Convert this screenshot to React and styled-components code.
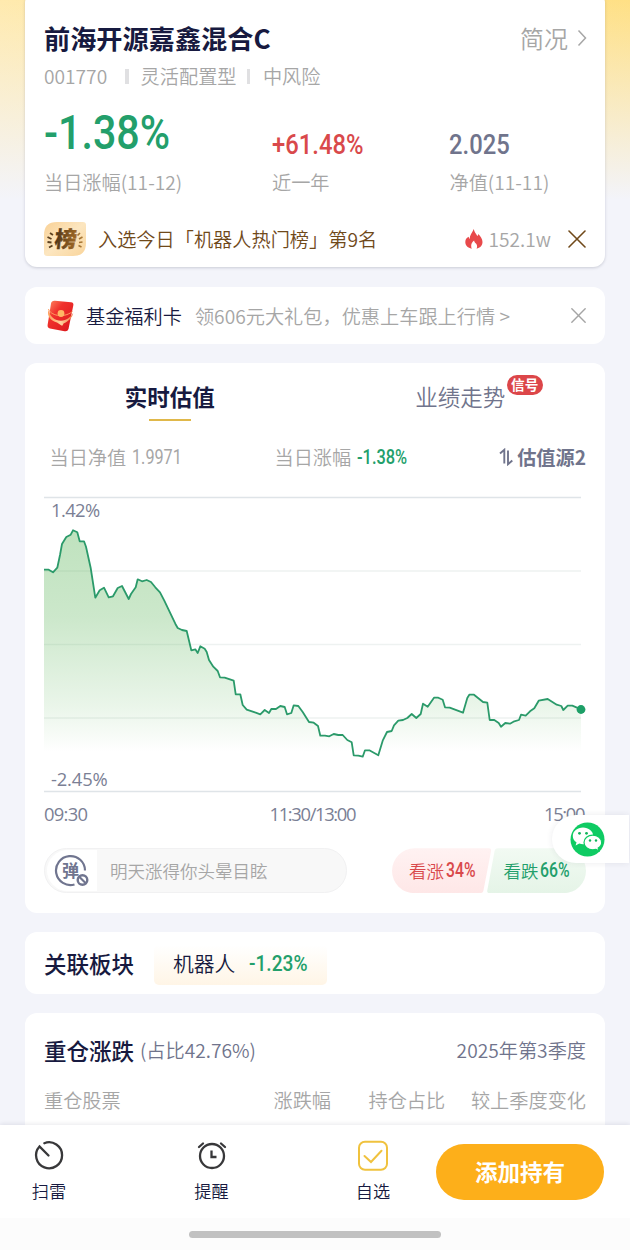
import React from 'react';
import styled, { createGlobalStyle, css } from 'styled-components';

const C = {
  page: '#f3f4fa',
  ink: '#171a40',
  slate: '#70748c',
  grey: '#a6a6a6',
  green: '#239f6b',
  red: '#d9494b',
  brown: '#70491a',
  amber: '#fdaf1a',
};

const GlobalStyle = createGlobalStyle`
  * { box-sizing: border-box; }
  body {
    margin: 0;
    font-family: 'Noto Sans CJK SC', sans-serif;
    font-weight: 350;
    color: ${C.ink};
    background: ${C.page};
  }
`;

const Screen = styled.div`
  width: 630px;
  height: 1250px;
  display: flex;
  flex-direction: column;
  overflow: hidden;
  background:
    linear-gradient(to bottom, rgba(243, 244, 250, 0), ${C.page}) 0 0 / 100% 200px no-repeat,
    linear-gradient(to right, #ffeaae, #ffe085) 0 0 / 100% 200px no-repeat,
    ${C.page};
`;

const Feed = styled.main`
  flex: 1;
  min-height: 0;
  overflow: hidden;
  display: flex;
  flex-direction: column;
  gap: 19.5px;
  padding: 0 24.6px;
`;

const Card = styled.section`
  flex: none;
  height: ${(p) => p.$h}px;
  padding: 0 19.4px;
  border-radius: 12px;
  background: #fff;
`;

const FundCard = styled(Card)`
  margin-top: -9px;
  padding-top: 27px;
  box-shadow: 0 1px 3px rgba(60, 64, 90, 0.22);
`;

const Row = styled.div`
  display: flex;
  align-items: center;
  justify-content: ${(p) => (p.$between ? 'space-between' : 'flex-start')};
  height: ${(p) => p.$h}px;
  white-space: nowrap;
`;

const Txt = styled.span`
  font-size: ${(p) => p.$size || 19.2}px;
  font-weight: ${(p) => p.$weight || 350};
  color: ${(p) => p.$color || C.grey};
  margin-left: ${(p) => p.$ml || 0}px;
  margin-right: ${(p) => p.$mr || 0}px;
  white-space: nowrap;
`;

const Num = styled.span`
  display: inline-block;
  font-family: Roboto, sans-serif;
  font-weight: ${(p) => p.$weight || 500};
  font-size: ${(p) => p.$size}px;
  line-height: ${(p) => p.$line || p.$size * 1.2}px;
  color: ${(p) => p.$color};
  transform: scaleX(${(p) => p.$sx || 0.85});
  transform-origin: left center;
  white-space: nowrap;
`;

const FundName = styled.h1`
  margin: 0;
  font-size: 26.2px;
  font-weight: 700;
`;

const Profile = styled.div`
  display: flex;
  align-items: center;
  gap: 9px;
  font-size: 24px;
  color: ${C.grey};
  margin-right: -1px;
`;

const Divider = styled.i`
  width: 3.4px;
  height: 15px;
  margin: 0 ${(p) => p.$after}px 0 ${(p) => p.$before}px;
  background: #e0e0e2;
`;

const Stats = styled.div`
  display: grid;
  grid-template-columns: 228px 177.5px 1fr;
  align-items: end;
  height: 105px;
`;

const Stat = styled.div`
  display: flex;
  flex-direction: column;
`;

const StatLabel = styled.span`
  height: 37px;
  line-height: 38px;
  font-size: 19.2px;
  color: ${C.grey};
`;

const Push = styled.div`
  margin-left: auto;
  display: flex;
  align-items: center;
`;

const Tabs = styled.div`
  display: flex;
  height: 58px;
  margin: 0 -19.4px;
`;

const Tab = styled.div`
  flex: 1;
  display: flex;
  justify-content: center;
  padding-top: 16px;
  font-size: 22.5px;
  line-height: 34px;
  font-weight: ${(p) => (p.$active ? 700 : 350)};
  color: ${(p) => (p.$active ? C.ink : C.slate)};
`;

const TabLabel = styled.span`
  position: relative;
  ${(p) =>
    p.$active &&
    css`
      &::after {
        content: '';
        position: absolute;
        left: 24px;
        bottom: 0;
        width: 42px;
        height: 2px;
        background: #e0b84a;
      }
    `}
`;

const SignalBadge = styled.span`
  position: absolute;
  left: 91.5px;
  top: -4px;
  width: 36px;
  height: 20px;
  border-radius: 10px;
  background: #dc4649;
  color: #fff;
  font-size: 13.6px;
  font-weight: 700;
  line-height: 19px;
  text-align: center;
`;

const Quote = styled.div`
  display: grid;
  grid-template-columns: 225px 1fr auto;
  align-items: center;
  height: 71.5px;
  padding-left: 5.5px;
`;

const QuoteItem = styled.div`
  display: flex;
  align-items: center;
  gap: ${(p) => p.$gap || 5.5}px;
`;

const ChartBox = styled.div`
  position: relative;
  height: 300px;
  svg { display: block; }
`;

const axisText = css`
  font-family: 'Open Sans', 'Noto Sans', sans-serif;
  font-weight: 400;
  font-size: 18.4px;
  line-height: 24px;
  color: #7b7f95;
`;

const Limit = styled.span`
  ${axisText}
  letter-spacing: ${(p) => p.$track}px;
  position: absolute;
  left: 7px;
  top: ${(p) => p.$top}px;
`;

const TimeAxis = styled.div`
  ${axisText}
  display: grid;
  grid-template-columns: 225.5px 1fr auto;
  align-items: center;
  height: 43px;
  margin-right: 2px;
`;

const Time = styled.span`
  letter-spacing: ${(p) => p.$track}px;
`;

const Actions = styled.div`
  display: flex;
  align-items: center;
  justify-content: space-between;
  margin-top: 12.5px;
  height: 45px;
`;

const Comment = styled.div`
  display: flex;
  align-items: center;
  width: 303px;
  height: 45px;
  padding: 2px;
  border: 1px solid #f1f1f2;
  border-radius: 23px;
  background: #f8f8f8;
`;

const CommentIcon = styled.div`
  display: flex;
  align-items: center;
  justify-content: center;
  width: 50px;
  height: 41px;
  margin-right: 13px;
  border-radius: 21px 0 0 21px;
  background: #fff;
`;

const Votes = styled.div`
  display: flex;
`;

const Vote = styled.div`
  display: flex;
  align-items: center;
  gap: 1.5px;
  width: 99px;
  height: 45px;
  ${(p) =>
    p.$up
      ? css`
          padding-left: 17px;
          background: linear-gradient(#fff2f2, #fee7e7);
          clip-path: path('M22.5 0 H97 Q99.5 0 99 3 L91.5 42 Q91 45 88 45 H22.5 A22.5 22.5 0 0 1 22.5 0Z');
        `
      : css`
          margin-left: -4px;
          padding-left: 16.5px;
          background: linear-gradient(#f2faf3, #e5f4e7);
          clip-path: path('M11 0 H76.5 A22.5 22.5 0 0 1 76.5 45 H3 Q-0.5 45 0.3 42 L7.5 3 Q8 0 11 0Z');
        `}
`;

const SectorTag = styled.div`
  display: flex;
  align-items: center;
  gap: 13.5px;
  width: 173px;
  height: 40px;
  margin: 4px 0 0 20px;
  padding: 0 19px 4px;
  border-radius: 5px;
  background: linear-gradient(#ffffff, #fff5e6);
`;

const HoldingHead = styled.div`
  display: grid;
  grid-template-columns: 229.5px 95px 1fr auto;
  align-items: center;
  height: 28px;
  font-size: 19.2px;
  color: ${C.grey};
`;

const ShareFloat = styled.button`
  position: absolute;
  left: 552px;
  top: 815px;
  width: 77px;
  height: 48px;
  padding: 0 0 0 18px;
  border: 0;
  border-radius: 24px 0 0 24px;
  background: #fff;
  box-shadow: 0 0 6px rgba(40, 44, 70, 0.09);
  display: flex;
  align-items: center;
`;

const BottomBar = styled.nav`
  flex: none;
  display: flex;
  height: 92.5px;
  padding: 0 26px 0 0;
  background: #fff;
  box-shadow: 0 -1px 4px rgba(40, 44, 70, 0.1);
  position: relative;
`;

const NavItem = styled.div`
  display: flex;
  flex-direction: column;
  align-items: center;
  width: ${(p) => p.$w}px;
  padding-top: 14px;
  font-size: 17.2px;
  line-height: 26px;
  svg { display: block; margin-bottom: 5px; }
`;

const AddButton = styled.button`
  width: 168px;
  height: 56px;
  margin: 18.5px 0 0 auto;
  padding: 0 0 1px;
  border: 0;
  border-radius: 28px;
  background: ${C.amber};
  color: #fff;
  font: 700 22.5px 'Noto Sans CJK SC', sans-serif;
`;

const HomeArea = styled.div`
  flex: none;
  height: 32.5px;
  padding-top: 13px;
  background: #fcfcfc;
  position: relative;
`;

const HomeIndicator = styled.div`
  width: 252px;
  height: 7px;
  margin: 0 auto;
  border-radius: 4px;
  background: #c1c1c1;
`;

// Intraday estimate in thirds of a pixel, from the upper left of the plot.
const SERIES = [
  [0, 218], [14, 218], [27, 226], [40, 212], [48, 174], [54, 141], [67, 120], [80, 113], [87, 100], [100, 106],
  [107, 133], [120, 133], [126, 149], [140, 213], [154, 302], [167, 280], [180, 272], [194, 301], [207, 298],
  [221, 273], [234, 267], [254, 306], [261, 291], [275, 271], [281, 247], [294, 253], [308, 249], [321, 255],
  [334, 271], [348, 286], [361, 311], [394, 380], [401, 393], [414, 399], [428, 402], [442, 460], [454, 457],
  [461, 468], [469, 448], [482, 455], [488, 465], [495, 489], [508, 509], [521, 522], [528, 541], [542, 542],
  [569, 551], [575, 592], [589, 592], [596, 624], [608, 638], [635, 647], [649, 652], [662, 639], [675, 648],
  [682, 636], [696, 636], [709, 627], [722, 630], [729, 652], [742, 648], [749, 625], [763, 627], [776, 645],
  [795, 675], [809, 677], [822, 687], [829, 716], [843, 716], [856, 718], [869, 711], [883, 714], [896, 714],
  [910, 729], [923, 736], [929, 775], [943, 776], [956, 779], [963, 760], [976, 760], [1003, 775], [1016, 731],
  [1029, 705], [1043, 702], [1050, 685], [1063, 671], [1077, 669], [1090, 663], [1103, 651], [1117, 663],
  [1130, 651], [1137, 620], [1151, 629], [1170, 602], [1183, 602], [1196, 608], [1203, 631], [1217, 632],
  [1257, 647], [1270, 603], [1276, 593], [1290, 593], [1317, 615], [1330, 617], [1337, 669], [1351, 669],
  [1364, 678], [1371, 689], [1384, 678], [1398, 680], [1411, 673], [1425, 669], [1431, 653], [1445, 656],
  [1458, 643], [1471, 634], [1484, 611], [1511, 606], [1538, 623], [1552, 627], [1558, 639], [1571, 626],
  [1585, 626], [1611, 637],
];
const LINE = SERIES.map(([x, y]) => `${(x / 3).toFixed(1)},${(y / 3 + 4).toFixed(1)}`).join(' L');

function Chart() {
  return (
    <ChartBox>
      <svg width="542" height="300" viewBox="0 0 542 300">
        <defs>
          <linearGradient id="fall" x1="0" y1="34" x2="0" y2="259" gradientUnits="userSpaceOnUse">
            <stop offset="0" stopColor="#5fb65c" stopOpacity="0.4" />
            <stop offset="0.4" stopColor="#5fb65c" stopOpacity="0.32" />
            <stop offset="0.8" stopColor="#5fb65c" stopOpacity="0.13" />
            <stop offset="1" stopColor="#5fb65c" stopOpacity="0" />
          </linearGradient>
        </defs>
        {[4.5, 78, 151.5, 225, 298.5].map((y, i) => (
          <line key={y} x1="0" x2="537" y1={y} y2={y} stroke={i % 4 ? '#eef2f1' : '#dfe4e8'} strokeWidth="1.6" />
        ))}
        <path d={`M${LINE} L537,259 L0,259 Z`} fill="url(#fall)" />
        <path d={`M${LINE}`} fill="none" stroke="#2b9a6a" strokeWidth="1.8" strokeLinejoin="round" />
        <circle cx="537" cy="216.5" r="4.4" fill="#1d9f67" />
      </svg>
      <Limit $top={5} $track={-0.6}>1.42%</Limit>
      <Limit $top={274.5} $track={-0.15}>-2.45%</Limit>
    </ChartBox>
  );
}

const Cross = ({ size, color, width }) => (
  <svg width={size} height={size} viewBox="0 0 18 18" fill="none" stroke={color} strokeWidth={width} strokeLinecap="round">
    <path d="M1 1 17 17M17 1 1 17" />
  </svg>
);

const RankBadge = () => (
  <svg width="42" height="34" viewBox="0 0 42 34">
    <defs>
      <linearGradient id="gold" x1="0" y1="0" x2="1" y2="1">
        <stop offset="0" stopColor="#f9d196" />
        <stop offset="0.5" stopColor="#fce6c0" />
        <stop offset="1" stopColor="#f9d49a" />
      </linearGradient>
      <linearGradient id="bronze" x1="0" y1="0" x2="1" y2="0">
        <stop offset="0" stopColor="#4d3418" />
        <stop offset="1" stopColor="#a36a24" />
      </linearGradient>
    </defs>
    <path d="M13 0H39Q42 0 42 3V21Q42 34 29 34H3Q0 34 0 31V13Q0 0 13 0Z" fill="url(#gold)" />
    <path d="M6 11 9 13M3.5 15 7.5 17M3.5 20 7.5 20.5M5 25.5 8.5 23.5" stroke="#5c4020" strokeWidth="1.8" />
    <path d="M36 11 33.5 13.5M38.5 15 35 17M38.5 20 35 20.5M37.5 25 34.5 23.5" stroke="#a67635" strokeWidth="1.6" />
    <text
      transform="translate(21 25) skewX(-6)"
      fontSize="22" fontWeight="900" textAnchor="middle" fill="url(#bronze)" stroke="url(#bronze)" strokeWidth="0.3"
    >
      榜
    </text>
  </svg>
);

const RedPacket = () => (
  <svg width="30" height="34" viewBox="0 0 30 34">
    <defs>
      <linearGradient id="packet" x1="0" y1="0" x2="1" y2="1">
        <stop offset="0" stopColor="#ff8a62" />
        <stop offset="0.35" stopColor="#f0322d" />
        <stop offset="1" stopColor="#d9151b" />
      </linearGradient>
      <linearGradient id="ribbon" x1="0" y1="0" x2="1" y2="0">
        <stop offset="0" stopColor="#ff9a54" />
        <stop offset="0.5" stopColor="#ffd3a0" />
        <stop offset="1" stopColor="#f0743e" />
      </linearGradient>
    </defs>
    <path d="M11 1.8 27 3.2Q30 3.6 29.3 6.5L24.5 30Q23.5 33 20.500 32.2L6 29.5Q3.2 28.8 3.6 26L7 4.5Q7.6 1.5 11 1.8Z" fill="url(#packet)" />
    <path d="M4.5 10C6 16 19 20 28.5 12.5" fill="none" stroke="#ff9d62" strokeWidth="1" />
    <path d="M4.5 11C2.5 17 7 22 13 23.5L17.5 26.5C18.5 27 19 26 19.5 24.5C24 22.5 28.5 19 29.3 13.5C27 18 22.5 21.5 17 21.8C11 21.8 6 18 4.5 11Z" fill="url(#ribbon)" />
    <circle cx="17" cy="14.5" r="3.4" fill="#ffb765" />
  </svg>
);

const Flame = () => (
  <svg width="18" height="20" viewBox="0 0 18 20">
    <path
      fill="#e8494b"
      d="M8.800 0C9.200 3 11 4.500 12.300 7C12.900 6.500 13.200 5.900 13.300 5C15.500 7 17.500 10 17.500 13C17.500 16.500 15 19 11.600 19.700C12.400 18 12.300 16.200 11 14.600C10 13.600 9.300 12.800 9.100 11.400C7.400 12.600 6.300 14.300 6.200 16.200C6.100 17.600 6.300 18.800 6.800 19.700C3 19 0.300 16.500 0.300 13C0.300 10 2 8.500 3.800 7.700C3.700 8.700 4 9.400 4.600 10C4.800 6 7 4 8.800 0Z"
    />
  </svg>
);

const SwapIcon = () => (
  <svg width="15" height="18" viewBox="0 0 15 18" fill="none" stroke={C.slate} strokeWidth="1.9">
    <path d="M1 5.500 5.300 1.800V15.500M9 2.500V16.200L13.300 12.500" />
  </svg>
);

const DanmuIcon = () => (
  <svg width="36" height="34" viewBox="0 0 36 34" fill="none" stroke="#70758f">
    <path d="M20.500 30.500A14.500 14.500 0 1 1 31 16.500" strokeWidth="2.2" />
    <text x="16.5" y="22.5" fontSize="17" fontWeight="700" textAnchor="middle" fill="#70758f" stroke="none">弹</text>
    <circle cx="28.5" cy="26" r="4.8" strokeWidth="2.4" fill="#fff" />
    <path d="M25.200 22.800 31.800 29.200" strokeWidth="2.2" />
  </svg>
);

const WechatIcon = () => (
  <svg width="35" height="35" viewBox="0 0 35 35">
    <circle cx="17.5" cy="17.5" r="17" fill="#0fcb63" />
    <path d="M13 5.500C7.300 5.500 2.800 9.200 2.800 13.900C2.800 16.600 4.300 18.800 6.500 20.300L5.600 23.400L9.300 21.600C10.500 22 11.700 22.200 13 22.200C18.500 22.200 23.200 18.500 23.200 13.900C23.200 9.200 18.500 5.500 13 5.500Z" fill="#fff" />
    <circle cx="9.5" cy="11.3" r="1.4" fill="#0fb45a" />
    <circle cx="16.5" cy="11.3" r="1.4" fill="#0fb45a" />
    <path
      d="M22.800 13.200C17.900 13.200 14 16.400 14 20.500C14 24.600 17.900 27.800 22.800 27.800C23.900 27.800 24.900 27.600 25.900 27.300L29 28.900L28.200 26.100C30.400 24.800 31.700 22.800 31.700 20.500C31.700 16.400 27.700 13.200 22.800 13.200Z"
      fill="#fff" stroke="#0fcb63" strokeWidth="1.2"
    />
    <circle cx="20" cy="18.5" r="1.2" fill="#0fb45a" />
    <circle cx="26" cy="18.5" r="1.2" fill="#0fb45a" />
  </svg>
);

const ScanIcon = () => (
  <svg width="32" height="34" viewBox="0.5 0.5 32 34" fill="none" stroke="#38383a" strokeWidth="2.3" strokeLinecap="round">
    <path d="M11.800 4.700A13 13 0 1 1 7 8L16 17" />
  </svg>
);

const AlarmIcon = () => (
  <svg width="32" height="34" viewBox="0 0.5 32 34" fill="none" stroke="#38383a" strokeWidth="2.3">
    <circle cx="16" cy="17.5" r="12" />
    <path d="M15.500 12V18.500H20.500" />
    <path d="M3 8.500 7 5M29 8.500 25 5" strokeLinecap="round" />
  </svg>
);

const CheckIcon = () => (
  <svg width="32" height="34" viewBox="0 0 32 34" fill="none" stroke="#f0c23e" strokeWidth="2">
    <rect x="2" y="2.8" width="28" height="28" rx="6" />
    <path d="M7.500 17 14 23 24.500 11.800" strokeLinecap="round" />
  </svg>
);

export default function App() {
  return (
    <>
      <GlobalStyle />
      <Screen>
        <Feed>
          <FundCard $h={276}>
            <Row $h={39} $between>
              <FundName>前海开源嘉鑫混合C</FundName>
              <Profile>
                简况
                <svg width="10" height="18" viewBox="0 0 10 18" fill="none" stroke={C.grey} strokeWidth="1.5">
                  <path d="M1.500 1.500 8.500 9 1.500 16.500" />
                </svg>
              </Profile>
            </Row>
            <Row $h={38}>
              <Txt>001770</Txt>
              <Divider $before={18} $after={12} />
              <Txt>灵活配置型</Txt>
              <Divider $before={10} $after={13} />
              <Txt>中风险</Txt>
            </Row>
            <Stats>
              <Stat>
                <Num $size={48.5} $line={60} $color={C.green}>-1.38%</Num>
                <StatLabel>当日涨幅(11-12)</StatLabel>
              </Stat>
              <Stat>
                <Num $size={28} $line={36} $color={C.red}>+61.48%</Num>
                <StatLabel>近一年</StatLabel>
              </Stat>
              <Stat>
                <Num $size={28} $line={36} $color={C.slate}>2.025</Num>
                <StatLabel>净值(11-11)</StatLabel>
              </Stat>
            </Stats>
            <Row $h={77}>
              <RankBadge />
              <Txt $color={C.brown} $ml={12}>入选今日「机器人热门榜」第9名</Txt>
              <Push>
                <Flame />
                <Txt $ml={6} $mr={17}>152.1w</Txt>
                <Cross size={18} color={C.brown} width={1.6} />
              </Push>
            </Row>
          </FundCard>

          <Card $h={57.3}>
            <Row $h={58.5}>
              <RedPacket />
              <Txt $color={C.ink} $ml={12} $mr={13}>基金福利卡</Txt>
              <Txt>领606元大礼包，优惠上车跟上行情 &gt;</Txt>
              <Push>
                <Cross size={15} color="#a5a5a5" width={1.7} />
              </Push>
            </Row>
          </Card>

          <Card $h={549.7}>
            <Tabs>
              <Tab $active><TabLabel $active>实时估值</TabLabel></Tab>
              <Tab>
                <TabLabel>
                  业绩走势
                  <SignalBadge>信号</SignalBadge>
                </TabLabel>
              </Tab>
            </Tabs>
            <Quote>
              <QuoteItem>
                <Txt>当日净值</Txt>
                <Num $size={20} $weight={400} $sx={0.81} $color={C.grey}>1.9971</Num>
              </QuoteItem>
              <QuoteItem>
                <Txt>当日涨幅</Txt>
                <Num $size={20} $sx={0.82} $color={C.green}>-1.38%</Num>
              </QuoteItem>
              <QuoteItem $gap={3.5}>
                <SwapIcon />
                <Txt $weight={700} $color={C.slate}>估值源2</Txt>
              </QuoteItem>
            </Quote>
            <Chart />
            <TimeAxis>
              <Time $track={-0.7}>09:30</Time>
              <Time $track={-1.35}>11:30/13:00</Time>
              <Time $track={-1.4}>15:00</Time>
            </TimeAxis>
            <Actions>
              <Comment>
                <CommentIcon><DanmuIcon /></CommentIcon>
                <Txt $size={17.5}>明天涨得你头晕目眩</Txt>
              </Comment>
              <Votes>
                <Vote $up>
                  <Txt $size={17.5} $color={C.red}>看涨</Txt>
                  <Num $size={19.5} $sx={0.81} $color={C.red}>34%</Num>
                </Vote>
                <Vote>
                  <Txt $size={17.5} $color={C.green}>看跌</Txt>
                  <Num $size={19.5} $sx={0.81} $color={C.green}>66%</Num>
                </Vote>
              </Votes>
            </Actions>
          </Card>

          <Card $h={61.5}>
            <Row $h={61.5}>
              <Txt $size={22.5} $weight={500} $color={C.ink}>关联板块</Txt>
              <SectorTag>
                <Txt $size={20.8} $color={C.ink}>机器人</Txt>
                <Num $size={22.5} $line={32} $color={C.green}>-1.23%</Num>
              </SectorTag>
            </Row>
          </Card>

          <Card $h={200}>
            <Row $h={72.5} $between>
              <Row>
                <Txt $size={22.5} $weight={500} $color={C.ink} $mr={6}>重仓涨跌</Txt>
                <Txt $color={C.slate}>(占比42.76%)</Txt>
              </Row>
              <Txt $color={C.slate}>2025年第3季度</Txt>
            </Row>
            <HoldingHead>
              <span>重仓股票</span>
              <span>涨跌幅</span>
              <span>持仓占比</span>
              <span>较上季度变化</span>
            </HoldingHead>
          </Card>
        </Feed>

        <BottomBar>
          <NavItem $w={98}><ScanIcon />扫雷</NavItem>
          <NavItem $w={227}><AlarmIcon />提醒</NavItem>
          <NavItem $w={96}><CheckIcon />自选</NavItem>
          <AddButton>添加持有</AddButton>
        </BottomBar>
        <HomeArea><HomeIndicator /></HomeArea>
        <ShareFloat><WechatIcon /></ShareFloat>
      </Screen>
    </>
  );
}
